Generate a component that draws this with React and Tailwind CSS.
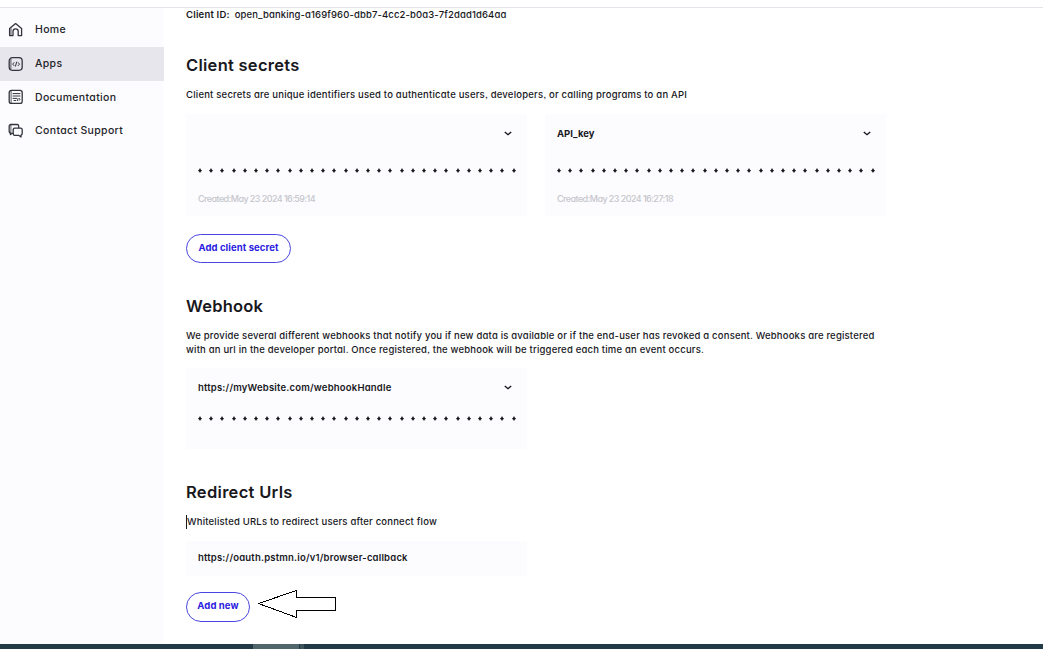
import React from "react";

const navItems = [
  { label: "Home", icon: HomeIcon },
  { label: "Apps", icon: AppsIcon, active: true },
  { label: "Documentation", icon: DocIcon },
  { label: "Contact Support", icon: ChatIcon },
];

function Icon({ children }) {
  return (
    <svg width="16" height="16" viewBox="0 0 16 16" fill="none" stroke="#34343e" strokeWidth="1.3" strokeLinecap="round" strokeLinejoin="round" className="shrink-0">
      {children}
    </svg>
  );
}

function HomeIcon() {
  return (
    <Icon>
      <path d="M1.6 6.6 7.6 1.6 13.6 6.6V13.6H10.2V9.4A2.6 2.6 0 0 0 5 9.4V13.6H1.6Z" />
      <path d="M3 6.6V13" strokeWidth="0.8" />
    </Icon>
  );
}

function AppsIcon() {
  return (
    <Icon>
      <rect x="1.2" y="1.7" width="13" height="12.6" rx="3.2" />
      <path d="M2.9 3V12.8" strokeWidth="0.8" />
      <path d="M6 6.6 4.7 8.1 6 9.6M8.6 6.1 7.5 10.2M10.2 6.6 11.5 8.1 10.2 9.6" strokeWidth="1" />
    </Icon>
  );
}

function DocIcon() {
  return (
    <Icon>
      <rect x="1.2" y="1.4" width="13" height="13" rx="2.2" />
      <path d="M3.1 1.8V14" strokeWidth="0.8" />
      <path d="M5 4.6H12M5 7H12M5 9.4H8.6M6 11.5H7.8M9.5 11.5 10 9.6M11.3 9.4 12 10.3 11.3 11.3" strokeWidth="1" />
    </Icon>
  );
}

function ChatIcon() {
  return (
    <Icon>
      <path d="M4.8 10.4H3.8L2.4 11.6V10A1.6 1.6 0 0 1 1.2 8.4V3.2A1.7 1.7 0 0 1 2.9 1.5H9A1.7 1.7 0 0 1 10.7 3.2V4.6" />
      <path d="M2.9 2.2V9.6" strokeWidth="0.8" />
      <path d="M6.6 5.2H12.6A1.6 1.6 0 0 1 14.2 6.8V10.6A1.6 1.6 0 0 1 13 12.2V14L10.6 12.3H6.8A1.6 1.6 0 0 1 5.2 10.7V6.8A1.5 1.5 0 0 1 6.6 5.2Z" />
    </Icon>
  );
}

function Chevron() {
  return (
    <svg width="8" height="6" viewBox="0 0 8 6" fill="none" stroke="#16161c" strokeWidth="1.4" className="shrink-0">
      <path d="M0.8 1 4 3.7 7.2 1" />
    </svg>
  );
}

function MaskedSecret() {
  return (
    <div className="flex h-[6px] w-[318px] items-center justify-between">
      {Array.from({ length: 29 }, (_, i) => (
        <svg key={i} width="4" height="6" viewBox="0 0 4 6" fill="#111116">
          <path d="M1.5 0.4H2.5L2.8 1.8 3.8 2.2V3.1L2.8 3.5 2.5 4.6H1.5L1.2 3.5 0.2 3.1V2.2L1.2 1.8Z" />
        </svg>
      ))}
    </div>
  );
}

function SecretCard({ name, created }) {
  return (
    <div className="h-[102px] w-[341px] bg-[#fcfcff] pl-[12px]">
      <div className="flex h-[39px] items-center justify-between pr-[15px]">
        <span className="text-[9.5px] font-bold leading-[14px]">{name}</span>
        <Chevron />
      </div>
      <div className="mt-[15px]">
        <MaskedSecret />
      </div>
      <div className="mt-[18px] text-[9px] font-medium leading-[14px] tracking-[-0.57px] text-[#c6c6cb]">{created}</div>
    </div>
  );
}

function PillButton({ children, className }) {
  return (
    <button className={"flex items-center justify-center rounded-full border-[1.5px] border-[#4a45e0] bg-white text-[9.5px] font-bold text-[#2a20e0] " + className}>
      {children}
    </button>
  );
}

function Heading({ children, className }) {
  return <h2 className={"h-[24px] whitespace-nowrap text-[16.5px] font-semibold leading-[24px] " + className}>{children}</h2>;
}

export default function App() {
  return (
    <div className="flex h-[652px] w-[1043px] flex-col overflow-hidden bg-white text-[#18181d] [font-family:Inter,sans-serif] [font-feature-settings:'cv11','ss03']">
      <div className="h-[8px] shrink-0 border-b border-[#e4e5ea]" />
      <div className="flex h-[636px] shrink-0">
        <nav className="flex w-[164px] shrink-0 flex-col bg-[#fcfcff] pt-[5.4px]">
          {navItems.map(({ label, icon: NavIcon, active }) => (
            <a
              key={label}
              className={"flex h-[33.6px] items-center gap-[11px] pl-[8px] text-[10.5px] font-medium tracking-[0.34px] text-[#24242b] " + (active ? "bg-[#e7e6ec]" : "")}
            >
              <NavIcon />
              {label}
            </a>
          ))}
        </nav>
        <main className="flex flex-col items-start pl-[22px]">
          <div className="flex h-[14px] items-center gap-[5px] whitespace-nowrap text-[9.5px] leading-[14px]">
            <span className="font-semibold tracking-[0.2px]">Client ID:</span>
            <span className="font-medium tracking-[0.12px]">open_banking-a169f960-dbb7-4cc2-b0a3-7f2dad1d64aa</span>
          </div>

          <Heading className="mt-[31px] tracking-[0.27px]">Client secrets</Heading>
          <p className="mt-[11px] whitespace-nowrap text-[9.5px] font-medium leading-[14px] tracking-[0.21px]">
            Client secrets are unique identifiers used to authenticate users, developers, or calling programs to an API
          </p>
          <div className="mt-[12px] flex gap-[18px]">
            <SecretCard name="" created="Created:May 23 2024 16:59:14" />
            <SecretCard name="API_key" created="Created:May 23 2024 16:27:18" />
          </div>
          <PillButton className="mt-[18px] h-[29px] w-[105px] tracking-[0.1px]">Add client secret</PillButton>

          <Heading className="mt-[31px] tracking-[0.2px]">Webhook</Heading>
          <p className="mt-[11px] whitespace-nowrap text-[9.5px] font-medium leading-[14px] tracking-[0.195px]">
            We provide several different webhooks that notify you if new data is available or if the end-user has revoked a consent. Webhooks are registered
            <br />
            with an url in the developer portal. Once registered, the webhook will be triggered each time an event occurs.
          </p>
          <div className="mt-[11px] h-[81px] w-[341px] bg-[#fcfcff] pl-[12px]">
            <div className="flex h-[40px] items-center justify-between pr-[15px]">
              <span className="text-[9.5px] font-semibold tracking-[0.2px]">https://myWebsite.com/webhookHandle</span>
              <Chevron />
            </div>
            <div className="mt-[8px]">
              <MaskedSecret />
            </div>
          </div>

          <Heading className="mt-[31px] tracking-[0.3px]">Redirect Urls</Heading>
          <div className="mt-[11px] flex h-[14px] items-center whitespace-nowrap border-l border-[#18181d] text-[9.5px] font-medium leading-[14px] tracking-[0.2px]">
            Whitelisted URLs to redirect users after connect flow
          </div>
          <div className="mt-[12px] flex h-[35px] w-[341px] items-center bg-[#fcfcff] pl-[12px]">
            <span className="text-[9.5px] font-semibold tracking-[0.2px]">https://oauth.pstmn.io/v1/browser-callback</span>
          </div>
          <div className="mt-[16px] flex items-start gap-[8px]">
            <PillButton className="h-[30px] w-[64px] pb-px tracking-[0.1px]">Add new</PillButton>
            <svg width="80" height="30" viewBox="0 0 80 30" fill="#fff" stroke="#000" strokeWidth="1" shapeRendering="crispEdges" className="-mt-[2px]">
              <path d="M0.5 13.5 38.5 0.5V7.5H77.5V20.5H38.5V27.5Z" />
            </svg>
          </div>
        </main>
      </div>
      <div className="flex h-[5px] shrink-0 bg-[#223a45]">
        <div className="ml-[253px] h-full w-[46px] bg-[#51666b]" />
        <div className="ml-px h-full w-[4px] bg-[#3e525a]" />
      </div>
      <div className="h-[3px] shrink-0 bg-white" />
    </div>
  );
}
